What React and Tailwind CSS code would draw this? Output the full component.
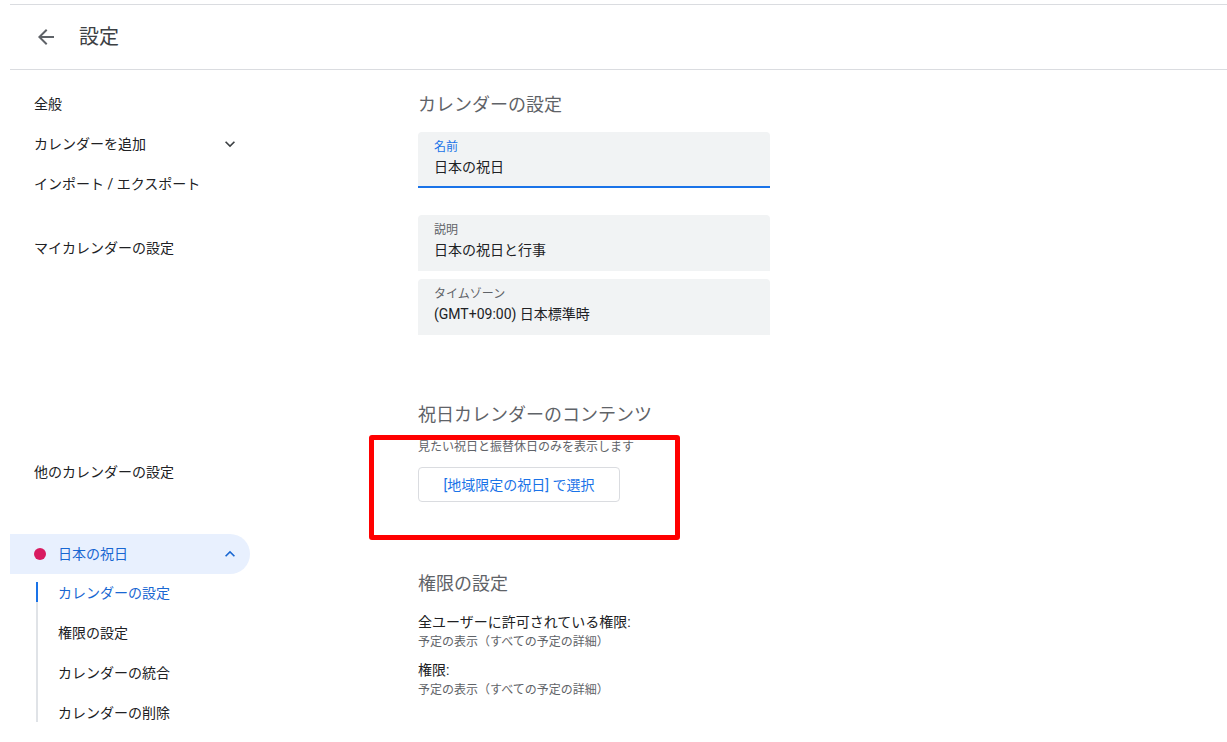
import React from "react";

const font = { fontFamily: "Roboto, 'Noto Sans CJK JP', sans-serif" };

function ChevronDown({ className }) {
  return (
    <svg viewBox="0 0 24 24" className={className} fill="currentColor">
      <path d="M7.41 8.59 12 13.17l4.59-4.58L18 10l-6 6-6-6z" />
    </svg>
  );
}

function ChevronUp({ className }) {
  return (
    <svg viewBox="0 0 24 24" className={className} fill="currentColor">
      <path d="M7.41 15.41 12 10.83l4.59 4.58L18 14l-6-6-6 6z" />
    </svg>
  );
}

function Field({ label, value, active }) {
  return (
    <div
      className={
        "w-[352px] h-14 rounded-t-[4px] bg-[#f1f3f4] px-4 pt-[7px] " +
        (active ? "border-b-2 border-[#1a73e8]" : "")
      }>
      <div className={"text-xs leading-4 " + (active ? "text-[#1a73e8]" : "text-[#5f6368]")}>
        {label}
      </div>
      <div className="mt-[2px] text-sm leading-5 text-[#202124]">{value}</div>
    </div>
  );
}

export default function App() {
  return (
    <div className="relative w-[1227px] h-[742px] overflow-hidden bg-white pl-[10px] pt-[4px]" style={font}>
      <header className="flex items-center h-[66px] border-t border-b border-[#dadce0] pl-6">
        <svg viewBox="0 0 24 24" className="w-6 h-6 text-[#5f6368]" fill="currentColor">
          <path d="M20 11H7.83l5.59-5.59L12 4l-8 8 8 8 1.41-1.41L7.83 13H20v-2z" />
        </svg>
        <h1 className="ml-[21px] text-[20px] leading-7 text-[#3c4043]">設定</h1>
      </header>

      <div className="flex">
        <nav className="w-[240px] pt-[14px] text-sm text-[#202124]">
          <div className="h-10 flex items-center pl-6">全般</div>
          <div className="h-10 flex items-center justify-between pl-6 pr-[10px]">
            <span>カレンダーを追加</span>
            <ChevronDown className="w-5 h-5 text-[#3c4043]" />
          </div>
          <div className="h-10 flex items-center pl-6">インポート / エクスポート</div>
          <div className="h-10 flex items-center pl-6 mt-6">マイカレンダーの設定</div>
          <div className="h-10 flex items-center pl-6 mt-[184px]">他のカレンダーの設定</div>
          <div className="mt-[42px] h-10 flex items-center justify-between rounded-r-full bg-[#e8f0fe] pl-6 pr-[10px] text-[#1967d2]">
            <div className="flex items-center">
              <span className="w-3 h-3 rounded-full bg-[#d81b60]" />
              <span className="ml-3">日本の祝日</span>
            </div>
            <ChevronUp className="w-5 h-5" />
          </div>
          <ul className="mt-2 ml-[26px] flex flex-col gap-5 border-l-2 border-[#e0e3e7]">
            <li className="h-5 leading-5 -ml-[2px] border-l-2 border-[#1a73e8] pl-[20px] pt-px text-[#1967d2]">
              カレンダーの設定
            </li>
            <li className="h-5 leading-5 pl-[20px] pt-px">権限の設定</li>
            <li className="h-5 leading-5 pl-[20px] pt-px">カレンダーの統合</li>
            <li className="h-5 leading-5 pl-[20px] pt-px">カレンダーの削除</li>
          </ul>
        </nav>

        <main className="ml-[168px] pt-[23px]">
          <h2 className="text-lg leading-6 text-[#5f6368]">カレンダーの設定</h2>
          <div className="mt-[15px]">
            <Field label="名前" value="日本の祝日" active />
          </div>
          <div className="mt-[27px]">
            <Field label="説明" value="日本の祝日と行事" />
          </div>
          <div className="mt-2">
            <Field label="タイムゾーン" value="(GMT+09:00) 日本標準時" />
          </div>

          <h2 className="mt-[68px] text-lg leading-6 text-[#5f6368]">祝日カレンダーのコンテンツ</h2>
          <p className="mt-[12px] text-xs leading-4 text-[#5f6368]">見たい祝日と振替休日のみを表示します</p>
          <button className="mt-[12px] h-[35px] w-[202px] rounded-[4px] border border-[#dadce0] bg-white text-sm text-[#1a73e8]">
            [地域限定の祝日] で選択
          </button>

          <h2 className="mt-[70px] text-lg leading-6 text-[#5f6368]">権限の設定</h2>
          <div className="mt-4 text-sm leading-5 text-[#202124]">全ユーザーに許可されている権限:</div>
          <div className="text-xs leading-4 mt-[2px] text-[#5f6368]">予定の表示（すべての予定の詳細）</div>
          <div className="mt-[10px] text-sm leading-5 text-[#202124]">権限:</div>
          <div className="text-xs leading-4 mt-[2px] text-[#5f6368]">予定の表示（すべての予定の詳細）</div>
        </main>
      </div>

      <div className="absolute left-[369px] top-[435px] w-[311px] h-[105px] border-[5px] border-[#ff0000] rounded-[3px]" />
    </div>
  );
}
